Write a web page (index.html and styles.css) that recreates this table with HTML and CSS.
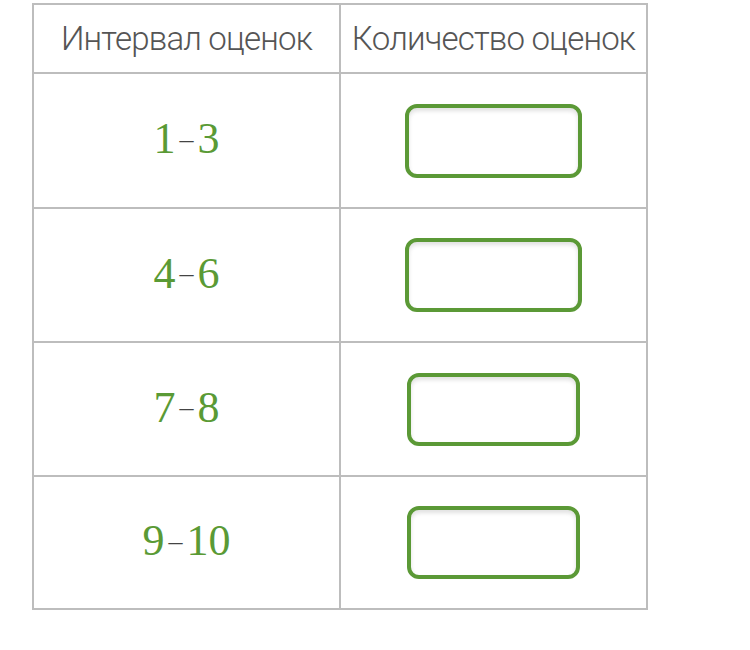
FILE: index.html
```html
<!DOCTYPE html>
<html lang="ru">
<head>
<meta charset="utf-8">
<link rel="stylesheet" href="styles.css">
</head>
<body>
<div class="grid">
  <div class="cell head">Интервал оценок</div>
  <div class="cell head">Количество оценок</div>

  <div class="cell num r1"><span>1</span><span class="dash">–</span><span>3</span></div>
  <div class="cell r1"><div class="box"></div></div>

  <div class="cell num r2"><span>4</span><span class="dash">–</span><span>6</span></div>
  <div class="cell r2"><div class="box"></div></div>

  <div class="cell num r3"><span>7</span><span class="dash">–</span><span>8</span></div>
  <div class="cell r3"><div class="box narrow"></div></div>

  <div class="cell num r4"><span>9</span><span class="dash">–</span><span>10</span></div>
  <div class="cell r4"><div class="box narrow"></div></div>
</div>
</body>
</html>
```
FILE: styles.css
```css
html, body {
  margin: 0;
  padding: 0;
  background: #ffffff;
}
body {
  padding: 3px 0 0 32px;
}
.grid {
  display: grid;
  grid-template-columns: 305px 305px;
  grid-template-rows: 67px 133px 132px 132px 131px;
  gap: 2px;
  padding: 2px;
  width: 612px;
  background: #bdbdbd;
}
.cell {
  background: #ffffff;
  display: flex;
  align-items: center;
  justify-content: center;
}
.head {
  font-family: Roboto, "Noto Sans", sans-serif;
  font-weight: 300;
  font-size: 33px;
  letter-spacing: -0.8px;
  color: #555555;
  white-space: nowrap;
}
.num {
  font-family: "Liberation Serif", "Times New Roman", serif;
  font-size: 44px;
  color: #5a9a35;
  padding-bottom: 4px;
  box-sizing: border-box;
}
.dash {
  font-size: 28px;
  color: #444444;
  margin: 0 4px;
}
.box {
  width: 169px;
  height: 66px;
  border: 4px solid #5b9936;
  border-radius: 12px;
  box-shadow: inset 0 3px 4px rgba(0, 0, 0, 0.12);
  background: #ffffff;
}
.box.narrow {
  width: 165px;
  height: 65px;
}
```
